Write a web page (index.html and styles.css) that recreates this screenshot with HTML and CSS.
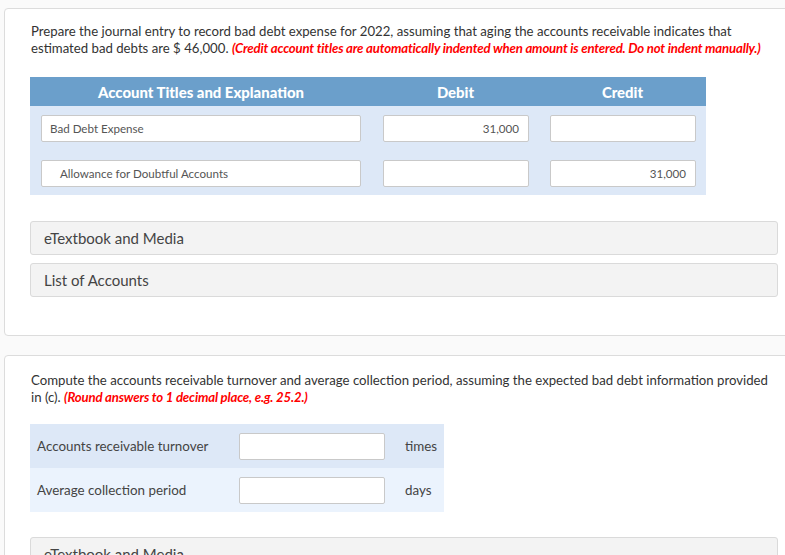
FILE: index.html
```html
<!DOCTYPE html>
<html>
<head>
<meta charset="utf-8">
<link rel="stylesheet" href="styles.css">
</head>
<body>
<div class="page">
  <section class="card">
    <p class="question">Prepare the journal entry to record bad debt expense for 2022, assuming that aging the accounts receivable indicates that estimated bad debts are $ 46,000. <em class="note">(Credit account titles are automatically indented when amount is entered. Do not indent manually.)</em></p>
    <div class="journal">
      <div class="jhead">
        <div class="hcell">Account Titles and Explanation</div>
        <div class="hcell">Debit</div>
        <div class="hcell">Credit</div>
      </div>
      <div class="jbody">
        <div class="jrow">
          <div class="cell acct"><div class="field">Bad Debt Expense</div></div>
          <div class="cell amt"><div class="field num">31,000</div></div>
          <div class="cell amt"><div class="field num"></div></div>
        </div>
        <div class="jrow">
          <div class="cell acct"><div class="field indent">Allowance for Doubtful Accounts</div></div>
          <div class="cell amt"><div class="field num"></div></div>
          <div class="cell amt"><div class="field num">31,000</div></div>
        </div>
      </div>
    </div>
    <div class="links">
      <div class="linkbox">eTextbook and Media</div>
      <div class="linkbox">List of Accounts</div>
    </div>
  </section>

  <section class="card card2">
    <p class="question">Compute the accounts receivable turnover and average collection period, assuming the expected bad debt information provided in (c). <em class="note">(Round answers to 1 decimal place, e.g. 25.2.)</em></p>
    <div class="ratios">
      <div class="rrow">
        <div class="rlabel">Accounts receivable turnover</div>
        <div class="rinput"></div>
        <div class="runit">times</div>
      </div>
      <div class="rrow alt">
        <div class="rlabel">Average collection period</div>
        <div class="rinput"></div>
        <div class="runit">days</div>
      </div>
    </div>
    <div class="links links2">
      <div class="linkbox">eTextbook and Media</div>
    </div>
  </section>
</div>
</body>
</html>
```

FILE: styles.css
```css
html, body {
  margin: 0;
  padding: 0;
  background: #fafafa;
  font-family: Lato, "Open Sans", "Liberation Sans", sans-serif;
  color: #333;
  overflow: hidden;
}
.page {
  width: 785px;
  height: 555px;
  overflow: hidden;
  padding: 8px 0 0 4px;
  box-sizing: border-box;
}
.card {
  width: 820px;
  background: #fff;
  border: 1px solid #dcdcdc;
  border-radius: 4px;
  padding: 14px 0 38px 25px;
  box-sizing: border-box;
}
.card2 {
  margin-top: 19px;
  padding-top: 16px;
}
.question {
  margin: 0 0 0 1px;
  width: 745px;
  font-size: 13.2px;
  line-height: 17px;
  color: #333;
}
.note {
  color: #ff0000;
  font-weight: 700;
  font-style: italic;
  letter-spacing: -0.18px;
}
.journal {
  margin-top: 20px;
  width: 676px;
}
.jhead {
  display: grid;
  grid-template-columns: 342px 167px 167px;
  height: 29px;
  background: #6b9fcb;
}
.hcell {
  color: #fff;
  font-weight: 900;
  font-size: 14.9px;
  text-align: center;
  line-height: 30px;
}
.jbody {
  background: #dde8f7;
  padding: 9px 0 8px;
  display: flex;
  flex-direction: column;
  gap: 18px;
}
.jrow {
  display: grid;
  grid-template-columns: 342px 167px 167px;
}
.cell.acct { padding: 0 11px 0 11px; }
.cell.amt { padding: 0 10px 0 11px; }
.field {
  height: 27px;
  background: #fff;
  border: 1px solid #c9c9c9;
  border-radius: 2px;
  box-sizing: border-box;
  font-size: 11.6px;
  line-height: 26px;
  color: #555;
  padding: 0 8px;
}
.field.indent { padding-left: 18px; }
.field.num { text-align: right; padding-right: 9px; }
.links {
  margin-top: 26px;
  width: 748px;
  display: flex;
  flex-direction: column;
  gap: 8px;
}
.links2 { margin-top: 25px; }
.linkbox {
  height: 34px;
  background: #f3f3f3;
  border: 1px solid #dadada;
  border-radius: 3px;
  box-sizing: border-box;
  padding-left: 13px;
  font-size: 15px;
  line-height: 33px;
  color: #444;
}
.ratios {
  margin-top: 18px;
  width: 414px;
}
.rrow {
  display: flex;
  align-items: center;
  height: 44px;
  background: #dde8f7;
  font-size: 13.4px;
  color: #444;
}
.rrow.alt { background: #ebf3fd; }
.rlabel {
  width: 209px;
  padding-left: 7px;
  box-sizing: border-box;
}
.rinput {
  width: 146px;
  height: 27px;
  background: #fff;
  border: 1px solid #c9c9c9;
  border-radius: 2px;
  box-sizing: border-box;
}
.runit {
  padding-left: 20px;
}
```
